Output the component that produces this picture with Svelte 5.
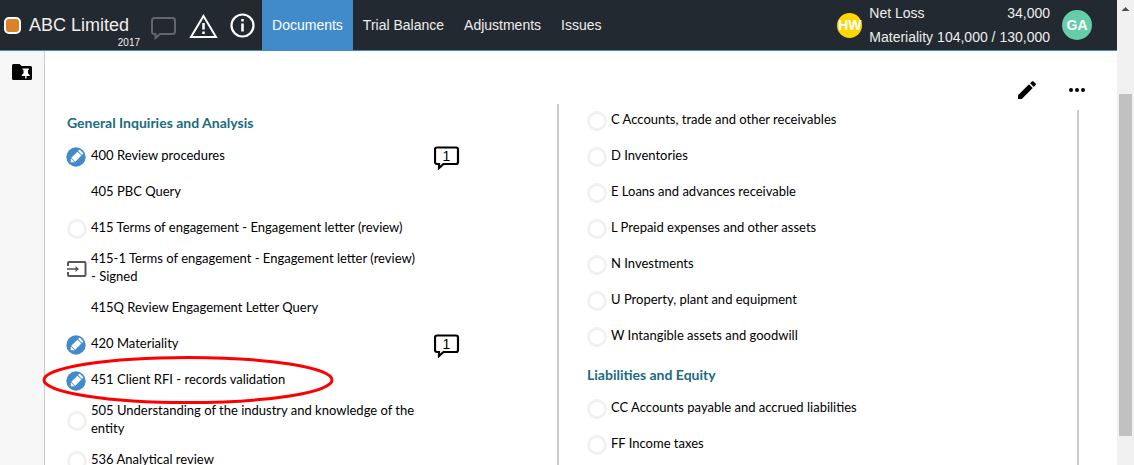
<script>
  const left = [
    { title: 'General Inquiries and Analysis' },
    { text: '400 Review procedures', icon: 'edit', notes: 1 },
    { text: '405 PBC Query' },
    { text: '415 Terms of engagement - Engagement letter (review)', icon: 'empty' },
    { text: '415-1 Terms of engagement - Engagement letter (review) - Signed', icon: 'import' },
    { text: '415Q Review Engagement Letter Query' },
    { text: '420 Materiality', icon: 'edit', notes: 1 },
    { text: '451 Client RFI - records validation', icon: 'edit', marked: true },
    { text: '505 Understanding of the industry and knowledge of the entity', icon: 'empty' },
    { text: '536 Analytical review', icon: 'empty' }
  ];
  const right = [
    { text: 'C Accounts, trade and other receivables', icon: 'empty' },
    { text: 'D Inventories', icon: 'empty' },
    { text: 'E Loans and advances receivable', icon: 'empty' },
    { text: 'L Prepaid expenses and other assets', icon: 'empty' },
    { text: 'N Investments', icon: 'empty' },
    { text: 'U Property, plant and equipment', icon: 'empty' },
    { text: 'W Intangible assets and goodwill', icon: 'empty' },
    { title: 'Liabilities and Equity' },
    { text: 'CC Accounts payable and accrued liabilities', icon: 'empty' },
    { text: 'FF Income taxes', icon: 'empty' }
  ];
  const tabs = ['Documents', 'Trial Balance', 'Adjustments', 'Issues'];
  let active = $state('Documents');
</script>

{#snippet list(items)}
  <div class="column">
    {#each items as item}
      {#if item.title}
        <h2>{item.title}</h2>
      {:else}
        <div class="row">
          <span class="status">
            {#if item.icon === 'edit'}
              <svg width="20" height="20" viewBox="0 0 20 20" overflow="visible" aria-hidden="true">
                <circle cx="9" cy="10" r="9.700" fill="#428bca" />
                <g transform="rotate(45 9 10)" fill="#fff">
                  <path d="M6.200 5.200h5.600v8.600H6.200z" />
                  <path d="M6.200 4.200V3q0-.8.8-.8h4q.8 0 .8.8v1.200z" />
                  <path d="M6.200 14.500h5.600L9 17.600z" />
                </g>
              </svg>
            {:else if item.icon === 'empty'}
              <svg width="20" height="20" viewBox="0 0 20 20" aria-hidden="true">
                <circle cx="10" cy="10" r="8.500" fill="#fff" stroke="#f1f1f1" stroke-width="2.800" />
              </svg>
            {:else if item.icon === 'import'}
              <svg width="20" height="20" viewBox="0 0 20 20" fill="none" stroke="#58585a" stroke-width="2" aria-hidden="true">
                <path d="M1 7V4q0-1 1-1h15.500q1 0 1 1v12q0 1-1 1H2q-1 0-1-1v-3" />
                <path d="M0 10h10" stroke-width="1.600" />
                <path d="M8.500 7l3.500 3-3.500 3z" fill="#58585a" stroke="none" />
              </svg>
            {/if}
          </span>
          <a href="#doc">{item.text}</a>
          {#if item.notes}
            <button class="note" aria-label="Notes">
              <svg width="26" height="24" viewBox="0 0 26 24" fill="#fff" stroke="#000" stroke-width="2.200" aria-hidden="true">
                <path d="M3 1.500h19q2 0 2 2V16q0 2-2 2H9.500L5 22v-4H3q-2 0-2-2V3.500q0-2 2-2z" />
              </svg>
              <span>{item.notes}</span>
            </button>
          {/if}
          {#if item.marked}
            <svg class="mark" width="292" height="50" viewBox="0 0 292 50" fill="none" aria-hidden="true">
              <ellipse cx="146" cy="25" rx="144" ry="22.500" stroke="#f00" stroke-width="3" />
            </svg>
          {/if}
        </div>
      {/if}
    {/each}
  </div>
{/snippet}

<div class="page">
  <div class="app">
    <header>
      <span class="badge"></span>
      <div class="entity">
        <span class="name">ABC Limited</span>
        <span class="year">2017</span>
      </div>
      <div class="tools">
        <button aria-label="Comments">
          <svg width="26" height="26" viewBox="0 0 26 26" fill="none" stroke="#63676c" stroke-width="2" aria-hidden="true">
            <path d="M4.500 3h18q2.500 0 2.500 2.500v11q0 2.500-2.500 2.500H10L5.500 23v-4h-1Q2 19 2 16.500v-11Q2 3 4.500 3z" />
          </svg>
        </button>
        <button aria-label="Warnings">
          <svg width="30" height="26" viewBox="0 0 30 26" fill="none" stroke="#fff" stroke-width="2" aria-hidden="true">
            <path d="M15.500 4L28 25H3z" />
            <path d="M15.500 11v6.500M15.500 19.500v2.500" stroke-width="2.500" />
          </svg>
        </button>
        <button aria-label="Information">
          <svg width="26" height="26" viewBox="0 0 26 26" fill="none" stroke="#fff" stroke-width="2.200" aria-hidden="true">
            <circle cx="12.500" cy="13.500" r="11" />
            <path d="M12.500 11.500v8M12.500 7v2.500" stroke-width="2.600" />
          </svg>
        </button>
      </div>
      <nav>
        {#each tabs as tab}
          <button class:active={active === tab} onclick={() => (active = tab)}>{tab}</button>
        {/each}
      </nav>
      <span class="avatar small">HW</span>
      <dl>
        <div><dt>Net Loss</dt><dd>34,000</dd></div>
        <div><dt>Materiality</dt><dd>104,000 / 130,000</dd></div>
      </dl>
      <span class="avatar">GA</span>
    </header>

    <div class="body">
      <aside>
        <button aria-label="Pinned documents">
          <svg width="20" height="17" viewBox="0 0 20 17" aria-hidden="true">
            <path d="M1.500 0h6l2 2H18.500q1.500 0 1.500 1.500v11q0 1.500-1.500 1.500h-17Q0 16 0 14.500v-13Q0 0 1.500 0z" />
            <path fill="#fff" d="M10.500 4.500h6.500v1.200h-1v3.600l1.700 1.700v1h-3.100v2.500h-1.400V12h-3.400v-1l1.700-1.700V5.700h-1z" />
          </svg>
        </button>
      </aside>
      <main>
        <div class="toolbar">
          <button aria-label="Edit">
            <svg width="20" height="20" viewBox="0 0 20 20" aria-hidden="true">
              <path d="M1 15.200L12 4.300 15.700 8 4.800 19H1z" />
              <path d="M13.100 3.200L14.900 1.400q.8-.8 1.600 0l2.100 2.100q.8.800 0 1.600L16.800 6.900z" />
            </svg>
          </button>
          <button aria-label="More">
            <svg width="16" height="20" viewBox="0 0 16 20" aria-hidden="true">
              <circle cx="2" cy="10" r="2" /><circle cx="8" cy="10" r="2" /><circle cx="14" cy="10" r="2" />
            </svg>
          </button>
        </div>
        <div class="columns">
          <section>
            {@render list(left)}
            <span class="rule"></span>
          </section>
          <section>
            {@render list(right)}
            <span class="rule low"></span>
          </section>
        </div>
      </main>
    </div>
  </div>
  <div class="scrollbar">
    <svg width="17" height="17" viewBox="0 0 17 17" aria-hidden="true"><path d="M4.500 11l4-4 4 4z" fill="#505050" /></svg>
    <span class="thumb"></span>
  </div>
</div>

<style>
  :global(body) {
    margin: 0;
    background: #fff;
  }
  .page {
    display: flex;
    height: 100vh;
    overflow: hidden;
    font-family: Lato, sans-serif;
    font-size: 13px;
    color: #000;
  }
  .app {
    flex: 1;
    min-width: 0;
    display: flex;
    flex-direction: column;
  }
  button {
    padding: 0;
    border: 0;
    background: none;
    font: inherit;
    color: inherit;
    cursor: pointer;
  }
  svg {
    display: block;
  }
  header {
    flex: none;
    display: flex;
    align-items: center;
    height: 50px;
    padding: 0 25px 0 4px;
    border-bottom: 1px solid #428bca;
    background: #232930;
    color: #eee;
    font-family: "Liberation Sans", Arial, sans-serif;
    font-size: 14px;
  }
  .badge {
    box-sizing: border-box;
    width: 17px;
    height: 17px;
    border: 2px solid #fff;
    border-radius: 5px;
    background: #dc8127;
  }
  .entity {
    display: flex;
    flex-direction: column;
    margin-left: 8px;
    padding-top: 12px;
  }
  .name {
    padding-right: 11px;
    font-size: 18px;
    line-height: 24px;
  }
  .year {
    align-self: flex-end;
    font-size: 10px;
    line-height: 12px;
  }
  .tools {
    display: flex;
    align-items: center;
    gap: 12px;
    margin: 0 6px 0 10px;
  }
  .tools button:first-child {
    padding-top: 6px;
  }
  nav {
    flex: 1;
    display: flex;
    align-self: stretch;
  }
  nav button {
    padding: 0 10px;
    white-space: nowrap;
  }
  nav .active {
    background: #428bca;
    color: #fff;
  }
  .avatar {
    display: flex;
    align-items: center;
    justify-content: center;
    width: 30px;
    height: 30px;
    border-radius: 50%;
    background: #66cdaa;
    color: #fff;
    font-weight: bold;
  }
  .small {
    width: 25px;
    height: 25px;
    background: #ffd700;
  }
  dl {
    margin: 0 12px 0 7px;
    line-height: 24px;
    white-space: nowrap;
  }
  dl div {
    display: flex;
    justify-content: space-between;
    gap: 4px;
  }
  dd {
    margin: 0;
  }
  .body {
    flex: 1;
    min-height: 0;
    display: flex;
  }
  aside {
    flex: none;
    box-sizing: border-box;
    width: 45px;
    padding: 13px 0 0 12px;
    border-right: 1px solid #ccc;
    background: #f7f7f7;
  }
  main {
    flex: 1;
    min-width: 0;
    display: flex;
    flex-direction: column;
    padding: 0 38px 0 22px;
  }
  .toolbar {
    flex: none;
    box-sizing: border-box;
    display: flex;
    justify-content: flex-end;
    align-items: center;
    gap: 32px;
    height: 50px;
    margin-right: -6px;
    padding-top: 28px;
  }
  .columns {
    flex: 1;
    min-height: 0;
    display: grid;
    grid-template-columns: minmax(0, 1fr) minmax(0, 1fr);
    gap: 28px;
  }
  section {
    display: flex;
  }
  .column {
    flex: 1;
    min-width: 0;
  }
  .rule {
    width: 2px;
    margin-top: 3px;
    background: #ccc;
  }
  .low {
    margin-top: 9px;
  }
  h2 {
    box-sizing: border-box;
    height: 36px;
    margin: 0;
    padding-top: 13px;
    font-size: 14px;
    line-height: 18px;
    color: #1b6b80;
  }
  .row {
    position: relative;
    box-sizing: border-box;
    display: flex;
    align-items: center;
    min-height: 36px;
    padding: 4px 0;
    line-height: 18px;
  }
  .status {
    flex: none;
    width: 20px;
    margin-right: 4px;
    padding-top: 3px;
  }
  .row a {
    width: 328px;
    color: inherit;
    text-decoration: none;
  }
  .note {
    position: relative;
    margin: -4px 0 -4px 15px;
    padding-top: 6px;
    font-family: "Liberation Sans", Arial, sans-serif;
    font-size: 14px;
  }
  .note span {
    position: absolute;
    top: 7px;
    left: 0;
    width: 25px;
    text-align: center;
  }
  .mark {
    position: absolute;
    left: -25px;
    top: -6px;
  }
  .scrollbar {
    flex: none;
    display: flex;
    flex-direction: column;
    width: 17px;
    background: #f1f1f1;
  }
  .thumb {
    height: 342px;
    margin: 77px 2px 0;
    background: #c1c1c1;
  }
</style>
